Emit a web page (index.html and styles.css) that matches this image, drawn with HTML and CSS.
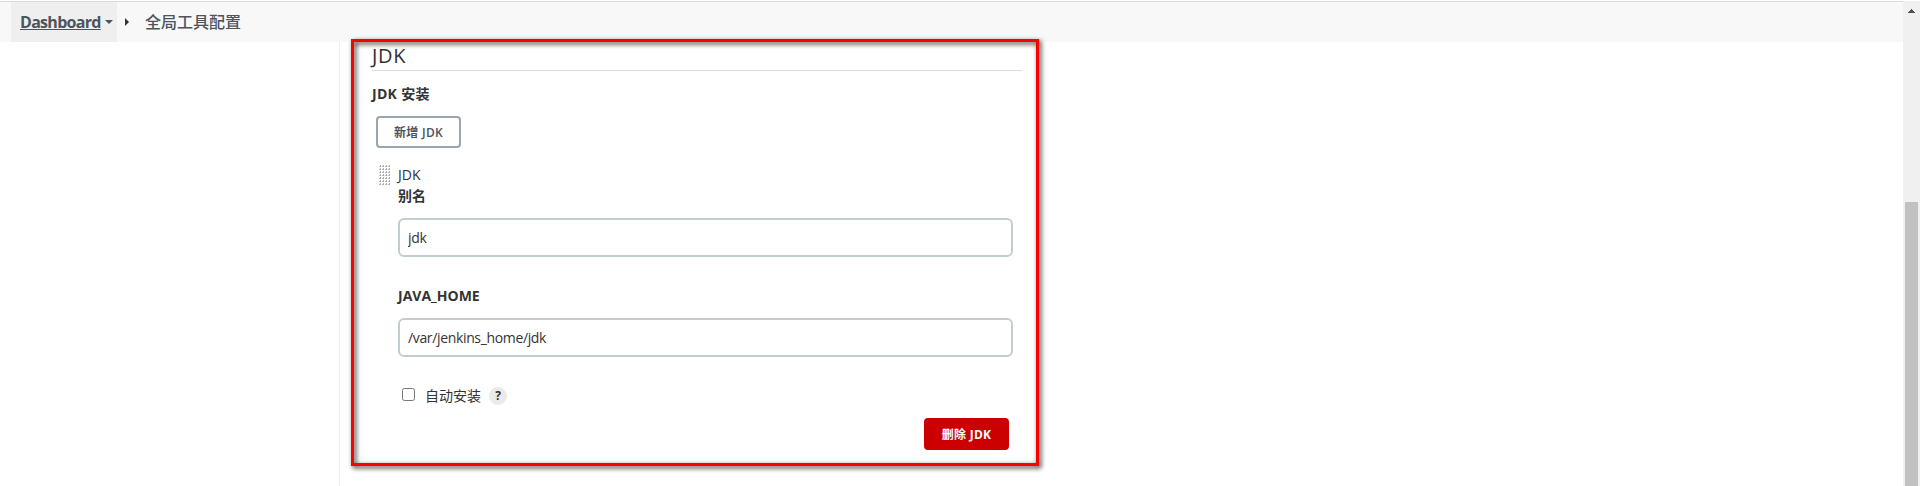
FILE: index.html
```html
<!DOCTYPE html>
<html lang="zh-CN">
<head>
<meta charset="utf-8">
<title>全局工具配置</title>
<link rel="stylesheet" href="styles.css">
</head>
<body>
<div class="page">
  <div class="view">
    <nav class="breadcrumbs">
      <div class="crumb">
        <a class="crumb-link">Dashboard</a>
        <svg class="caret" width="8" height="4" viewBox="0 0 8 4"><path d="M0 0h8L4 4z"/></svg>
      </div>
      <svg class="separator" width="4" height="8" viewBox="0 0 4 8"><path d="M0 0l4 4-4 4z"/></svg>
      <span class="crumb-title">全局工具配置</span>
    </nav>
    <main class="content">
      <section class="config">
        <h2 class="heading">JDK</h2>
        <div class="group-label">JDK 安装</div>
        <button class="btn add">新增 JDK</button>
        <div class="item">
          <svg class="grip" width="12" height="21" viewBox="0 0 12 21" shape-rendering="crispEdges">
            <defs><pattern id="dots" width="3" height="3" patternUnits="userSpaceOnUse"><path d="M0 1h2v1H0z" fill="#bbb"/><path d="M1 0h1v2H1z" fill="#aaa"/></pattern></defs>
            <rect width="12" height="21" fill="url(#dots)"/>
          </svg>
          <div class="fields">
            <div class="item-name">JDK</div>
            <div class="label alias">别名</div>
            <input class="input" type="text" value="jdk">
            <div class="label java">JAVA_HOME</div>
            <input class="input" type="text" value="/var/jenkins_home/jdk">
            <div class="auto">
              <span class="check"></span>
              <span class="check-label">自动安装</span>
              <span class="help">?</span>
            </div>
            <div class="actions"><button class="btn delete">删除 JDK</button></div>
          </div>
        </div>
      </section>
    </main>
  </div>
  <div class="scrollbar">
    <svg class="up" width="7" height="4" viewBox="0 0 7 4" shape-rendering="crispEdges"><path d="M3 0h1v1h1v1h1v1h1v1H0V3h1V2h1V1h1z"/></svg>
    <div class="thumb"></div>
  </div>
  <div class="highlight"></div>
</div>
</body>
</html>
```
FILE: styles.css
```css
* { box-sizing: border-box; }
body {
  margin: 0;
  background: #fff;
  color: #333;
  font: 14px/20px "Open Sans", "Noto Sans CJK SC", sans-serif;
}
.page {
  position: relative;
  display: flex;
  width: 1920px;
  height: 486px;
  overflow: hidden;
  padding-top: 1px;
}
.view { flex: 1; display: flex; flex-direction: column; border-top: 1px solid #d9dbdb; }
.breadcrumbs {
  display: flex;
  align-items: center;
  height: 40px;
  padding-left: 11px;
  background: #f8f8f8;
  color: #4d545d;
  font-size: 16px;
}
.crumb {
  display: flex;
  align-items: center;
  width: 106px;
  height: 40px;
  padding-left: 9px;
  background: #efefef;
}
.crumb-link {
  width: 80px;
  font-size: 16px;
  font-weight: 700;
  letter-spacing: -0.7px;
  text-decoration: underline;
}
.caret { margin-left: 5px; fill: #4d545d; }
.separator { margin-left: 8px; fill: #333; }
.crumb-title { margin-left: 16px; font-weight: 500; }
.content { flex: 1; padding-left: 339px; }
.config {
  width: 683px;
  height: 100%;
  padding-left: 32px;
  border-left: 1px solid #eee;
}
.heading {
  height: 29px;
  margin: 0;
  border-bottom: 1px solid #ddd;
  font-size: 20px;
  font-weight: 400;
  line-height: 28px;
  letter-spacing: 0.7px;
}
.group-label { margin-top: 13px; font-weight: 700; letter-spacing: 0.3px; }
.btn {
  display: block;
  width: 85px;
  height: 32px;
  padding: 1px 0 0;
  border: 2px solid #9aa5b0;
  border-radius: 4px;
  background: #fff;
  color: #4d545d;
  font: 600 12px/27px "Open Sans", "Noto Sans CJK SC", sans-serif;
  letter-spacing: 0.3px;
  text-align: center;
}
.add { margin: 12px 0 0 4px; }
.item { display: flex; padding: 17px 9px 0 7px; }
.grip { margin-right: 7px; }
.fields { flex: 1; }
.item-name { height: 20px; font-weight: 400; }
.label { font-weight: 700; }
.alias { height: 20px; margin-bottom: 13px; line-height: 22px; }
.java { margin: 29px 0 12px; }
.input {
  display: block;
  width: 615px;
  height: 39px;
  padding: 0 8px 1px;
  border: 2px solid #c3cdd1;
  border-radius: 6px;
  outline: 0;
  background: #fff;
  color: #333;
  font: 14px "Open Sans", "Noto Sans CJK SC", sans-serif;
  letter-spacing: -0.35px;
}
.auto { display: flex; align-items: center; height: 20px; margin-top: 29px; }
.check {
  width: 13px;
  height: 13px;
  margin: -3px 10px 0 4px;
  border: 1px solid #767676;
  border-radius: 2.5px;
}
.help {
  width: 18px;
  height: 18px;
  margin-left: 8px;
  border-radius: 50%;
  background: #eaeaea;
  font-size: 12px;
  font-weight: 700;
  line-height: 18px;
  text-align: center;
}
.actions { display: flex; justify-content: flex-end; padding: 12px 4px 0 0; }
.delete { border-color: #c00; background: #c00; color: #fff; font-weight: 700; }
.scrollbar { width: 17px; padding: 8px 2px 0; background: #f0f0f0; }
.up { display: block; margin-left: 3px; fill: #505050; }
.thumb { height: 284px; margin-top: 189px; background: #c1c1c1; }
.highlight {
  position: absolute;
  left: 351px;
  top: 39px;
  width: 688px;
  height: 427px;
  border: 3px solid #f00;
  filter: drop-shadow(2px 2px 2.5px rgba(0, 0, 0, 0.85));
  pointer-events: none;
}
```
